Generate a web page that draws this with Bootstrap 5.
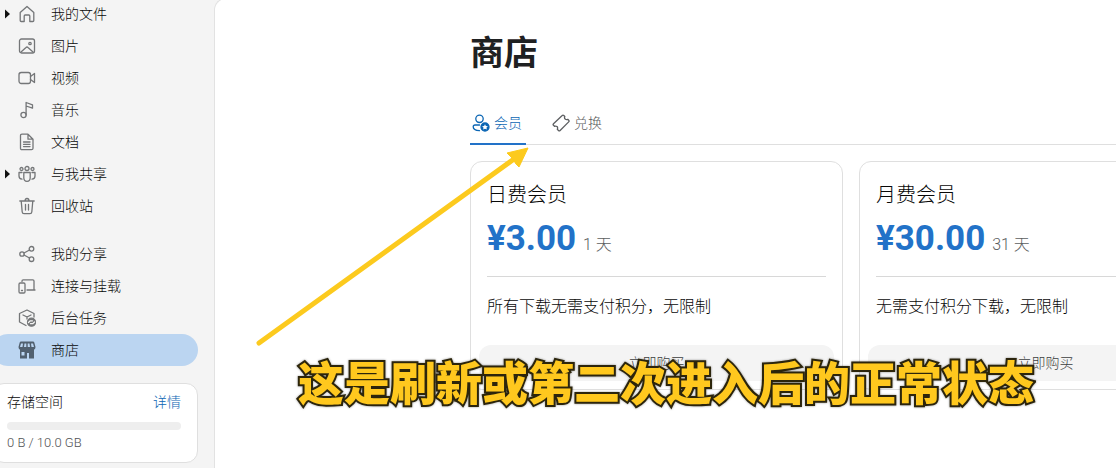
<!DOCTYPE html>
<html lang="zh-CN">
<head>
<meta charset="utf-8">
<meta name="viewport" content="width=device-width, initial-scale=1">
<title>商店</title>
<link href="https://cdn.jsdelivr.net/npm/bootstrap@5.3.0/dist/css/bootstrap.min.css" rel="stylesheet">
<style>
:root { --brand: #2272c8; --ink: #080808; --muted: #5c5e60; --line: #dfdfdf; }
body { font-family: Roboto, "Noto Sans CJK SC", sans-serif; font-weight: 300; font-size: 14px; color: var(--ink); background: #f4f4f4; }
.shell { min-height: 100vh; }
.sidebar { flex: 0 0 214px; margin-top: -2px; }
.side-link { height: 32px; margin-left: -8px; margin-right: 16px; padding-left: 10px; border-radius: 16px; color: var(--ink); text-decoration: none; }
.side-link .caret { width: 8px; height: 12px; margin-left: 1px; fill: #111; flex: none; }
.side-link .glyph { width: 18px; height: 18px; margin-left: 7px; margin-right: 15px; flex: none; color: #747678; }
.side-link.current { background: #bbd5f1; }
.side-link.current .glyph { color: #51606f; }
.line-icon { fill: none; stroke: currentColor; stroke-width: 1.3; stroke-linecap: round; stroke-linejoin: round; }
.storage { margin: 17px 16px 0 -8px; padding: 8px 16px 11px 14px; border: 1px solid var(--line); border-radius: 12px; background: #fff; }
.storage a { color: #0b66b4; text-decoration: none; }
.storage .progress { height: 8px; background: #eee; margin: 9px 0 5px; }
.storage .usage { font-size: 13px; line-height: 16px; color: #505254; }
.main-pane { min-width: 0; overflow: hidden; background: #fff; border: solid #e2e2e2; border-width: 1px 0 0 1px; border-top-left-radius: 12px; margin-top: -2px; padding: 34px 0 0 255px; }
.page-title { font-size: 34px; line-height: 40px; font-weight: 700; color: #1f2122; margin: 0 0 32px; }
.shop-tabs { border-bottom: 1px solid var(--line); margin-bottom: 16px; gap: 24px; }
.shop-tabs button { height: 40px; padding: 0 4px 2px 2px; border: 0; border-bottom: 2px solid transparent; background: none; color: var(--muted); font-weight: 300; margin-bottom: -1px; }
.shop-tabs button.active { color: #0b66b4; border-bottom-color: var(--brand); }
.shop-tabs svg { width: 18px; height: 18px; }
.plans { gap: 16px; }
.plan { flex: 0 0 373px; border: 1px solid var(--line); border-radius: 12px; }
.plan-info { padding: 17px 16px 0; }
.plan h2 { font-size: 20px; line-height: 32px; font-weight: 300; margin: 0; }
.price { line-height: 56px; color: var(--muted); font-size: 16px; }
.price strong { font-size: 35px; font-weight: 700; color: var(--brand); margin-right: 3px; }
.plan hr { margin: 3px 0 16px; border-color: #d8d8d8; opacity: 1; }
.plan p { font-size: 16px; line-height: 28px; margin: 0; }
.buy { height: 36px; border: 0; border-radius: 12px; background: #f4f4f4; color: #3c3e40; font-weight: 300; }
.caption-text { left: 298px; right: 0; top: 346px; white-space: nowrap; font: 900 46px/68px "Noto Sans CJK SC", sans-serif; color: #ffc81e; -webkit-text-stroke: 4px #2c250c; paint-order: stroke fill; filter: drop-shadow(0 0 1px #0006); }
.pointer { left: 250px; top: 140px; width: 290px; height: 212px; pointer-events: none; }
</style>
</head>
<body>
<div class="shell d-flex position-relative overflow-hidden">
  <aside class="sidebar">
    <nav class="d-flex flex-column">
      <a href="#" class="side-link d-flex align-items-center"><svg class="caret" viewBox="0 0 8 12"><path d="M2 1.500v9L7 6z"/></svg><svg class="glyph line-icon" viewBox="0 0 18 18"><path d="M2.200 7.500 9 1.500l6.800 6v8q0 1-1 1h-3V11q0-1-1-1H7.200q-1 0-1 1v5.500h-3q-1 0-1-1z"/></svg>我的文件</a>
      <a href="#" class="side-link d-flex align-items-center"><span class="caret"></span><svg class="glyph line-icon" viewBox="0 0 18 18"><rect x="1.500" y="2" width="15" height="14" rx="2"/><path d="m3 15 5-4.500q1-1 2 0l5 4.500"/><circle cx="12" cy="6.500" r="1.200"/></svg>图片</a>
      <a href="#" class="side-link d-flex align-items-center"><span class="caret"></span><svg class="glyph line-icon" viewBox="0 0 18 18"><rect x="1" y="3.500" width="11.500" height="11" rx="2.200"/><path d="m12.500 7.500 4-3v9l-4-3"/></svg>视频</a>
      <a href="#" class="side-link d-flex align-items-center"><span class="caret"></span><svg class="glyph line-icon" viewBox="0 0 18 18"><circle cx="5.500" cy="14" r="2.600"/><path d="M8.100 14V1.500l6.400 2.300v3.400L8.100 5"/></svg>音乐</a>
      <a href="#" class="side-link d-flex align-items-center"><span class="caret"></span><svg class="glyph line-icon" viewBox="0 0 18 18"><path d="M4 1.200h6l5 5v9q0 1.500-1.500 1.500H4q-1.500 0-1.500-1.500V2.700Q2.500 1.200 4 1.200zM10 1.200v5h5M5.500 9h6.500M5.500 11.300h6.500M5.500 13.600h6.500"/></svg>文档</a>
      <a href="#" class="side-link d-flex align-items-center"><svg class="caret" viewBox="0 0 8 12"><path d="M2 1.500v9L7 6z"/></svg><svg class="glyph line-icon" viewBox="0 0 18 18"><circle cx="9" cy="3.500" r="2"/><circle cx="3.500" cy="4" r="1.500"/><circle cx="14.500" cy="4" r="1.500"/><path d="M5.800 7.500h6.400v5.300q0 3.500-3.200 3.500t-3.200-3.500zM4 7.500H1V11q0 3 3 3.200M14 7.500h3V11q0 3-3 3.200"/></svg>与我共享</a>
      <a href="#" class="side-link d-flex align-items-center mb-3"><span class="caret"></span><svg class="glyph line-icon" viewBox="0 0 18 18"><path d="M1.800 4h14.400M7 4q0-2.500 2-2.500T11 4M3.200 4l1 11q.2 1.700 1.800 1.700h6q1.600 0 1.800-1.700l1-11M7.500 7.500v5.500M10.500 7.500v5.500"/></svg>回收站</a>
      <a href="#" class="side-link d-flex align-items-center"><span class="caret"></span><svg class="glyph line-icon" viewBox="0 0 18 18"><circle cx="4" cy="9" r="2.200"/><circle cx="13.500" cy="3.800" r="2.300"/><circle cx="13.500" cy="14.200" r="2.300"/><path d="m6 8 5.500-3M6 10l5.500 3"/></svg>我的分享</a>
      <a href="#" class="side-link d-flex align-items-center"><span class="caret"></span><svg class="glyph line-icon" viewBox="0 0 18 18"><path d="M4 4.500V4q0-1.200 1.200-1.200h9.600Q16 2.800 16 4v8.500M9 13h8"/><rect x="1" y="6" width="6" height="10" rx="1.200"/><path d="M3.500 13.500h1"/></svg>连接与挂载</a>
      <a href="#" class="side-link d-flex align-items-center"><span class="caret"></span><svg class="glyph line-icon" viewBox="0 0 18 18"><path d="M8 16.500 1.500 13V4.500L9 1l7 3.500V8M5 6l4 2 4-2M9 8v2"/><circle cx="13.500" cy="13.200" r="4" fill="currentColor"/><path d="m10.500 13.500 1.800-1.700h2.200M16.500 13l-1.800 1.700h-2.200" stroke="#f4f4f4"/></svg>后台任务</a>
      <a href="#" class="side-link current d-flex align-items-center" aria-current="page"><span class="caret"></span><svg class="glyph" viewBox="0 0 18 18" fill="currentColor"><path fill-rule="evenodd" d="M3 .5h12q1 0 1.300 1L17.500 6q0 2-1.500 2.800V17.500h-5V12H9v5.500H2V8.800Q.5 8 .5 6L1.700 1.500Q2 .5 3 .5zM3 2.500 2 6h2.500l.5-3.500zM6.500 2.500 6 6h2.300V2.500zM9.700 2.500V6H12l-.5-3.500zM13 2.500l.5 3.500H16l-1-3.500zM3.500 11v3.500h3V11z"/></svg>商店</a>
    </nav>
    <section class="storage">
      <div class="d-flex justify-content-between"><span>存储空间</span><a href="#">详情</a></div>
      <div class="progress" role="progressbar" aria-label="存储空间"></div>
      <div class="usage">0 B / 10.0 GB</div>
    </section>
  </aside>
  <main class="main-pane flex-grow-1">
    <h1 class="page-title">商店</h1>
    <div class="shop-tabs d-flex" role="tablist">
      <button type="button" role="tab" aria-selected="true" class="active d-flex align-items-center gap-1"><svg class="line-icon" viewBox="0 0 18 18"><circle cx="7.500" cy="4.800" r="3.700"/><path d="M7.500 11H3q-1.800 0-1.800 1.800 0 3.700 6.300 3.900"/><circle cx="13" cy="13" r="4" fill="currentColor"/><path fill="#fff" stroke="none" d="m13 10.200.9 1.800 2 .2-1.400 1.400.3 2-1.800-.9-1.800.9.300-2-1.400-1.400 2-.2z"/></svg>会员</button>
      <button type="button" role="tab" aria-selected="false" class="d-flex align-items-center gap-1"><svg class="line-icon" viewBox="0 0 18 18"><path d="M10.200 1.500q.8-.8 1.600 0l1 1q-.8 2 .6 2.700 1.100.7 2.300.1l1 1q.8.800 0 1.600l-8.600 8.600q-.8.800-1.600 0l-1.200-1.200q.8-1.800-.3-2.700-1.200-.9-2.500-.3l-1-1q-.8-.8 0-1.600z"/></svg>兑换</button>
    </div>
    <div class="plans d-flex">
      <article class="plan">
        <div class="plan-info"><h2>日费会员</h2><div class="price"><strong>¥3.00</strong> 1 天</div><hr><p>所有下载无需支付积分，无限制</p></div>
        <div class="p-2 mt-3"><button type="button" class="buy w-100">立即购买</button></div>
      </article>
      <article class="plan">
        <div class="plan-info"><h2>月费会员</h2><div class="price"><strong>¥30.00</strong> 31 天</div><hr><p>无需支付积分下载，无限制</p></div>
        <div class="p-2 mt-3"><button type="button" class="buy w-100">立即购买</button></div>
      </article>
    </div>
  </main>
  <svg class="pointer position-absolute" viewBox="0 0 290 212"><path d="M9 203 264 19" stroke="#fcca1e" stroke-width="5" stroke-linecap="round"/><path d="m278 8-21 5 5 5 4 6 3 3z" fill="#fcca1e" stroke="#fcca1e" stroke-linejoin="round"/></svg>
  <div class="caption-text position-absolute">这是刷新或第二次进入后的正常状态</div>
</div>
<script src="https://cdn.jsdelivr.net/npm/bootstrap@5.3.0/dist/js/bootstrap.bundle.min.js"></script>
</body>
</html>
